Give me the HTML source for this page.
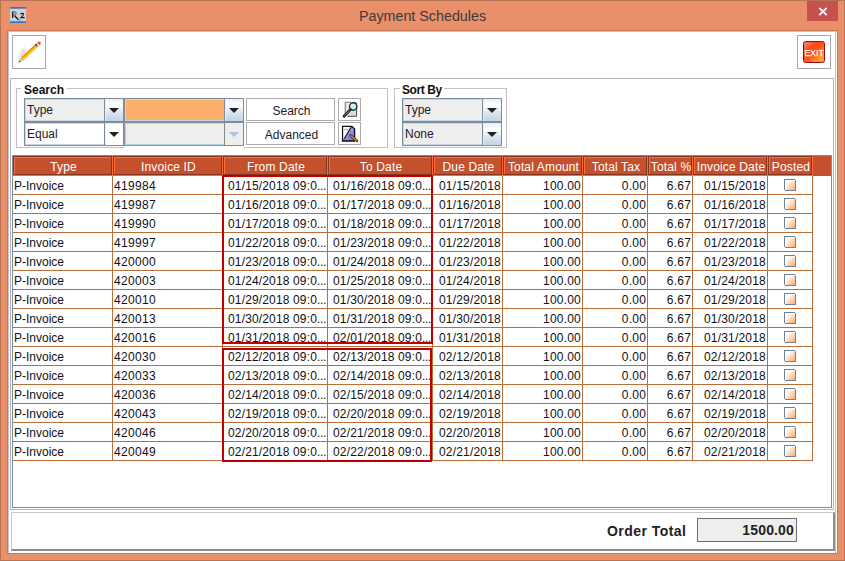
<!DOCTYPE html>
<html><head><meta charset="utf-8">
<style>
*{margin:0;padding:0;box-sizing:border-box}
html,body{width:845px;height:561px;overflow:hidden}
body{position:relative;background:#E9906A;font-family:"Liberation Sans",sans-serif;font-size:12px;color:#111}
.abs{position:absolute}
.t{position:absolute;white-space:nowrap;line-height:14px}
.n{letter-spacing:0.2px}
.id{letter-spacing:0.33px}
.dt{letter-spacing:0.15px}
.el{letter-spacing:-0.33px}
</style></head><body>

<div class="abs" style="left:0;top:0;width:845px;height:1px;background:#B77453"></div>
<div class="abs" style="left:0;top:0;width:1px;height:561px;background:#B77453"></div>
<div class="abs" style="left:844px;top:0;width:1px;height:561px;background:#B77453"></div>
<div class="abs" style="left:0;top:560px;width:845px;height:1px;background:#B77453"></div>
<svg class="abs" style="left:10px;top:7px" width="16" height="16">
 <rect x="0" y="0" width="16" height="16" fill="#CBD1D8"/>
 <rect x="0" y="0" width="16" height="1.7" fill="#3574C4"/>
 <rect x="0" y="14.3" width="16" height="1.7" fill="#3574C4"/>
 <path d="M2.7 5 V11" stroke="#111" stroke-width="1.3"/>
 <path d="M1.8 4.9 H4.5 Q6.6 5 6.2 6.8 Q5.8 8.2 3.6 8.1" stroke="#444" stroke-width="0.9" fill="none"/>
 <path d="M4.6 8.6 L8.4 12.8" stroke="#111" stroke-width="1.3"/>
 <path d="M10.4 7.2 Q11.8 5.8 13.2 6.5 Q14.2 7.6 11 10.6 L14.6 10.6" stroke="#1A1A1A" stroke-width="1.2" fill="none"/>
 <circle cx="10" cy="13.2" r="0.6" fill="#556"/>
</svg>
<div class="t" style="left:0;width:845px;text-align:center;top:7px;font-size:14.3px;line-height:18px;color:#3A3A3A">Payment Schedules</div>
<div class="abs" style="left:807px;top:1px;width:31px;height:20px;background:#C75050"></div>
<svg class="abs" style="left:807px;top:1px" width="31" height="20"><path d="M12.3 6.8 L19.7 14.2 M19.7 6.8 L12.3 14.2" stroke="#fff" stroke-width="1.7"/></svg>
<div class="abs" style="left:7px;top:30px;width:831px;height:524px;border:1px solid #C97A55"></div>
<div class="abs" style="left:8px;top:31px;width:829px;height:522px;background:#fff;border-left:1px solid #BFC8CE;border-top:1px solid #BFC8CE"></div>
<div class="abs" style="left:835px;top:32px;width:1px;height:521px;background:#C4C4C4"></div>
<div class="abs" style="left:12px;top:35px;width:34px;height:34px;border:1px solid #A8A8A8;background:#fff"></div>
<svg class="abs" style="left:12px;top:35px" width="34" height="34">
 <defs><filter id="bl" x="-1" y="-1" width="3" height="3"><feGaussianBlur stdDeviation="1.6"/></filter></defs>
 <path d="M7.5 24.5 L13 14" stroke="#BDBDBD" stroke-width="3" filter="url(#bl)" opacity="0.75"/>
 <g transform="translate(6.3,27.8) rotate(-43.3)">
  <path d="M0 0 L6.5 -1.8 L6.5 1.8 Z" fill="#F0C49C"/>
  <path d="M0 0 L2.6 -0.75 L2.6 0.75 Z" fill="#1E1E1E"/>
  <path d="M3.2 -1.1 L6.5 -0.6 M3.6 1 L6.5 1.3" stroke="#C89070" stroke-width="0.5"/>
  <rect x="6.5" y="-1.8" width="18" height="3.6" fill="#FFB000"/>
  <rect x="6.5" y="-1.8" width="18" height="1.1" fill="#E48800"/>
  <rect x="6.5" y="0.6" width="18" height="1.2" fill="#FFD23C"/>
  <rect x="24.5" y="-1.8" width="1.6" height="2.2" fill="#262626"/>
  <rect x="24.5" y="0.4" width="1.6" height="1.4" fill="#9A9A9A"/>
  <rect x="26.1" y="-1.8" width="1.2" height="3.6" fill="#E8E8E8"/>
  <path d="M27.3 -1.8 H28.6 Q30.3 -1.6 30.3 0 Q30.3 1.6 28.6 1.8 H27.3 Z" fill="#FF5A22"/>
 </g>
</svg>
<div class="abs" style="left:797px;top:35px;width:34px;height:34px;border:1px solid #A8A8A8;background:#fff"></div>
<div class="abs" style="left:803px;top:41px;width:22px;height:22px;border:1px solid #9A0A0A;border-radius:2.5px;background:linear-gradient(135deg,#EE8A7A 0%,#FF4818 32%,#FF5218 52%,#FF9C30 82%,#FFA434 100%)"></div>
<div class="t" style="left:803px;top:46.4px;width:22px;text-align:center;font-size:9.6px;line-height:14px;color:#fff;transform:scaleX(0.92);transform-origin:11.4px 0;-webkit-text-stroke:0.25px #fff">EXIT</div>
<div class="abs" style="left:10px;top:78px;width:824px;height:432px;border:1px solid #B4B4B4"></div>
<div class="abs" style="left:16px;top:88px;width:372px;height:60px;border:1px solid #C0C0C0"></div>
<div class="abs" style="left:394px;top:88px;width:113px;height:60px;border:1px solid #C0C0C0"></div>
<div class="t" style="left:21px;top:83px;padding:0 3px 0 3px;background:#fff;font-weight:bold;font-size:12px">Search</div>
<div class="t" style="left:400px;top:83px;padding:0 2px;background:#fff;font-weight:bold;font-size:12px;letter-spacing:-0.4px">Sort By</div>
<div class="abs" style="left:24px;top:98px;width:100px;height:24px;background:#EEEEEE;border:1px solid #7D8D9C;box-shadow:inset 1px 1px 0 #C8D6E4,inset -1px -1px 0 #C8D6E4"></div>
<div class="abs" style="left:104px;top:98px;width:20px;height:24px;background:linear-gradient(#EAF0F6 0%,#FFFFFF 30%,#DCE6F0 60%,#C2D4E6 100%);border:1px solid #7D8D9C;box-shadow:inset 1px 1px 0 #E6EEF6"></div>
<svg class="abs" style="left:104px;top:98px" width="20" height="24"><path d="M5 10 L15 10 L10 15 Z" fill="#222"/></svg>
<div class="t" style="left:27px;top:103px;font-size:12px;color:#1A1A2A">Type</div>
<div class="abs" style="left:24px;top:122px;width:100px;height:24px;background:#FFFFFF;border:1px solid #7D8D9C;box-shadow:inset 1px 1px 0 #C8D6E4,inset -1px -1px 0 #C8D6E4"></div>
<div class="abs" style="left:104px;top:122px;width:20px;height:24px;background:#FFFFFF;border:1px solid #7D8D9C;box-shadow:inset 1px 1px 0 #E6EEF6"></div>
<svg class="abs" style="left:104px;top:122px" width="20" height="24"><path d="M5 10 L15 10 L10 15 Z" fill="#222"/></svg>
<div class="t" style="left:27px;top:127px;font-size:12px;color:#1A1A2A">Equal</div>
<div class="abs" style="left:124px;top:98px;width:120px;height:24px;background:#FBAF6B;border:1px solid #7D8D9C;box-shadow:inset 1px 1px 0 #C8D6E4,inset -1px -1px 0 #C8D6E4"></div>
<div class="abs" style="left:224px;top:98px;width:20px;height:24px;background:linear-gradient(#EAF0F6 0%,#FFFFFF 30%,#DCE6F0 60%,#C2D4E6 100%);border:1px solid #7D8D9C;box-shadow:inset 1px 1px 0 #E6EEF6"></div>
<svg class="abs" style="left:224px;top:98px" width="20" height="24"><path d="M5 10 L15 10 L10 15 Z" fill="#222"/></svg>
<div class="abs" style="left:124px;top:122px;width:120px;height:24px;background:#EEEEEE;border:1px solid #8A96A2;box-shadow:inset 1px 1px 0 #B8CEE4,inset -2px -1px 0 #B8CEE4"></div>
<div class="abs" style="left:224px;top:122px;width:20px;height:24px;background:#EEEEEE;border:1px solid #8A8A8A;border-top-color:#7D8D9C"></div>
<svg class="abs" style="left:224px;top:122px" width="20" height="24"><path d="M5 10 L15 10 L10 15 Z" fill="#A8C4E0"/></svg>
<div class="abs" style="left:124px;top:146px;width:120px;height:2px;background:#fff"></div>
<div class="abs" style="left:402px;top:98px;width:100px;height:24px;background:#EEEEEE;border:1px solid #7D8D9C;box-shadow:inset 1px 1px 0 #C8D6E4,inset -1px -1px 0 #C8D6E4"></div>
<div class="abs" style="left:482px;top:98px;width:20px;height:24px;background:linear-gradient(#EAF0F6 0%,#FFFFFF 30%,#DCE6F0 60%,#C2D4E6 100%);border:1px solid #7D8D9C;box-shadow:inset 1px 1px 0 #E6EEF6"></div>
<svg class="abs" style="left:482px;top:98px" width="20" height="24"><path d="M5 10 L15 10 L10 15 Z" fill="#222"/></svg>
<div class="t" style="left:405px;top:103px;font-size:12px;color:#1A1A2A">Type</div>
<div class="abs" style="left:402px;top:122px;width:100px;height:24px;background:#EEEEEE;border:1px solid #7D8D9C;box-shadow:inset 1px 1px 0 #C8D6E4,inset -1px -1px 0 #C8D6E4"></div>
<div class="abs" style="left:482px;top:122px;width:20px;height:24px;background:linear-gradient(#EAF0F6 0%,#FFFFFF 30%,#DCE6F0 60%,#C2D4E6 100%);border:1px solid #7D8D9C;box-shadow:inset 1px 1px 0 #E6EEF6"></div>
<svg class="abs" style="left:482px;top:122px" width="20" height="24"><path d="M5 10 L15 10 L10 15 Z" fill="#222"/></svg>
<div class="t" style="left:405px;top:127px;font-size:12px;color:#1A1A2A">None</div>
<div class="abs" style="left:246px;top:98px;width:89px;height:23px;border:1px solid #ABABAB;background:#fff"></div>
<div class="t" style="left:247px;top:104px;width:89px;text-align:center;color:#1A1A2A">Search</div>
<div class="abs" style="left:246px;top:122px;width:89px;height:23px;border:1px solid #ABABAB;background:#fff"></div>
<div class="t" style="left:247px;top:128px;width:89px;text-align:center;color:#1A1A2A">Advanced</div>
<div class="abs" style="left:338px;top:98px;width:23px;height:23px;border:1px solid #ABABAB;background:#fff"></div>
<div class="abs" style="left:338px;top:122px;width:23px;height:23px;border:1px solid #ABABAB;background:#fff"></div>
<svg class="abs" style="left:338px;top:98px" width="23" height="23">
 <defs><linearGradient id="mg" x1="0" y1="0" x2="1" y2="1"><stop offset="0" stop-color="#FFFFFF"/><stop offset="0.5" stop-color="#B4F6F6"/><stop offset="1" stop-color="#A0ECF0"/></linearGradient>
 <linearGradient id="ag" x1="0" y1="0" x2="1" y2="1"><stop offset="0" stop-color="#C8C8FF"/><stop offset="1" stop-color="#6060F0"/></linearGradient></defs>
 <path d="M7.2 4.2 H17.5 L18.6 5.3 V18.3 H7.2 Z" fill="#DCDCDC"/>
 <path d="M7.2 18.3 V4.2 H13" stroke="#777" stroke-width="1" fill="none"/>
 <path d="M17 4.2 L18.6 5.3 V18.3 H9.5" stroke="#4A4A4A" stroke-width="1" fill="none"/>
 <path d="M8.5 6 H12 M8.5 8 H11 M8.5 10 H10.5" stroke="#FFFFFF" stroke-width="1"/>
 <circle cx="15.2" cy="8.5" r="3.7" fill="url(#mg)" stroke="#2A2A2A" stroke-width="1.4"/>
 <path d="M12.4 11.6 L6 18.2" stroke="#262626" stroke-width="2.8" stroke-linecap="round"/>
 <path d="M11.6 12.6 L6.6 17.6" stroke="#9A9A9A" stroke-width="0.8"/>
</svg>
<svg class="abs" style="left:338px;top:122px" width="23" height="23">
 <path d="M4.6 4.4 H14 L16.6 7 V19 H4.6 Z" fill="url(#ag)" stroke="#111" stroke-width="1.3"/>
 <path d="M5.3 5.1 H13.4 L6.6 16.6 L5.3 17 Z" fill="#FFFFFF"/>
 <path d="M5.5 7.4 Q8 6.8 10 8.4" stroke="#9090F0" stroke-width="1.2" fill="none" opacity="0.8"/>
 <path d="M6.2 16.8 L13.2 5" stroke="#111" stroke-width="1.2"/>
 <path d="M12.6 13.6 L18.8 18.8" stroke="#3A2A20" stroke-width="2.8" stroke-linecap="round"/>
 <path d="M12.8 13.8 L18.6 18.6" stroke="#E07038" stroke-width="1.6" stroke-linecap="round"/>
</svg>
<div class="abs" style="left:12px;top:155px;width:820px;height:353px;border:1px solid #7B8EA2;background:#fff"></div>
<div class="abs" style="left:13px;top:156px;width:818px;height:20px;background:#C4502E"></div>
<div class="abs" style="left:13px;top:175px;width:800px;height:1px;background:#FF6A3A"></div>
<div class="abs" style="left:13px;top:156px;width:99px;height:19px;border:1px solid #86351C;box-shadow:inset 1px 1px 0 #FF6E3C"></div>
<div class="abs" style="left:112px;top:156px;width:1px;height:20px;background:#FF6A3A"></div>
<div class="t" style="left:14px;top:160px;width:99px;text-align:center;color:#fff;letter-spacing:0.15px">Type</div>
<div class="abs" style="left:113px;top:156px;width:109px;height:19px;border:1px solid #86351C;box-shadow:inset 1px 1px 0 #FF6E3C"></div>
<div class="abs" style="left:222px;top:156px;width:1px;height:20px;background:#FF6A3A"></div>
<div class="t" style="left:114px;top:160px;width:109px;text-align:center;color:#fff;letter-spacing:0.15px">Invoice ID</div>
<div class="abs" style="left:223px;top:156px;width:104px;height:19px;border:1px solid #86351C;box-shadow:inset 1px 1px 0 #FF6E3C"></div>
<div class="abs" style="left:327px;top:156px;width:1px;height:20px;background:#FF6A3A"></div>
<div class="t" style="left:224px;top:160px;width:104px;text-align:center;color:#fff;letter-spacing:0.15px">From Date</div>
<div class="abs" style="left:328px;top:156px;width:104px;height:19px;border:1px solid #86351C;box-shadow:inset 1px 1px 0 #FF6E3C"></div>
<div class="abs" style="left:432px;top:156px;width:1px;height:20px;background:#FF6A3A"></div>
<div class="t" style="left:329px;top:160px;width:104px;text-align:center;color:#fff;letter-spacing:0.15px">To Date</div>
<div class="abs" style="left:433px;top:156px;width:69px;height:19px;border:1px solid #86351C;box-shadow:inset 1px 1px 0 #FF6E3C"></div>
<div class="abs" style="left:502px;top:156px;width:1px;height:20px;background:#FF6A3A"></div>
<div class="t" style="left:434px;top:160px;width:69px;text-align:center;color:#fff;letter-spacing:0.15px">Due Date</div>
<div class="abs" style="left:503px;top:156px;width:79px;height:19px;border:1px solid #86351C;box-shadow:inset 1px 1px 0 #FF6E3C"></div>
<div class="abs" style="left:582px;top:156px;width:1px;height:20px;background:#FF6A3A"></div>
<div class="t" style="left:504px;top:160px;width:79px;text-align:center;color:#fff;letter-spacing:0.15px">Total Amount</div>
<div class="abs" style="left:583px;top:156px;width:64px;height:19px;border:1px solid #86351C;box-shadow:inset 1px 1px 0 #FF6E3C"></div>
<div class="abs" style="left:647px;top:156px;width:1px;height:20px;background:#FF6A3A"></div>
<div class="t" style="left:584px;top:160px;width:64px;text-align:center;color:#fff;letter-spacing:0.15px">Total Tax</div>
<div class="abs" style="left:648px;top:156px;width:44px;height:19px;border:1px solid #86351C;box-shadow:inset 1px 1px 0 #FF6E3C"></div>
<div class="abs" style="left:692px;top:156px;width:1px;height:20px;background:#FF6A3A"></div>
<div class="t" style="left:649px;top:160px;width:44px;text-align:center;color:#fff;letter-spacing:0.15px">Total %</div>
<div class="abs" style="left:693px;top:156px;width:74px;height:19px;border:1px solid #86351C;box-shadow:inset 1px 1px 0 #FF6E3C"></div>
<div class="abs" style="left:767px;top:156px;width:1px;height:20px;background:#FF6A3A"></div>
<div class="t" style="left:694px;top:160px;width:74px;text-align:center;color:#fff;letter-spacing:0.15px">Invoice Date</div>
<div class="abs" style="left:768px;top:156px;width:44px;height:19px;border:1px solid #86351C;box-shadow:inset 1px 1px 0 #FF6E3C"></div>
<div class="abs" style="left:812px;top:156px;width:1px;height:20px;background:#FF6A3A"></div>
<div class="t" style="left:769px;top:160px;width:44px;text-align:center;color:#fff;letter-spacing:0.15px">Posted</div>
<div class="abs" style="left:13px;top:194px;width:800px;height:1px;background:#B96F3A"></div>
<div class="abs" style="left:13px;top:213px;width:800px;height:1px;background:#B96F3A"></div>
<div class="abs" style="left:13px;top:232px;width:800px;height:1px;background:#B96F3A"></div>
<div class="abs" style="left:13px;top:251px;width:800px;height:1px;background:#B96F3A"></div>
<div class="abs" style="left:13px;top:270px;width:800px;height:1px;background:#B96F3A"></div>
<div class="abs" style="left:13px;top:289px;width:800px;height:1px;background:#B96F3A"></div>
<div class="abs" style="left:13px;top:308px;width:800px;height:1px;background:#B96F3A"></div>
<div class="abs" style="left:13px;top:327px;width:800px;height:1px;background:#B96F3A"></div>
<div class="abs" style="left:13px;top:346px;width:800px;height:1px;background:#B96F3A"></div>
<div class="abs" style="left:13px;top:365px;width:800px;height:1px;background:#B96F3A"></div>
<div class="abs" style="left:13px;top:384px;width:800px;height:1px;background:#B96F3A"></div>
<div class="abs" style="left:13px;top:403px;width:800px;height:1px;background:#B96F3A"></div>
<div class="abs" style="left:13px;top:422px;width:800px;height:1px;background:#B96F3A"></div>
<div class="abs" style="left:13px;top:441px;width:800px;height:1px;background:#B96F3A"></div>
<div class="abs" style="left:13px;top:460px;width:800px;height:1px;background:#B96F3A"></div>
<div class="abs" style="left:112px;top:176px;width:1px;height:285px;background:#B96F3A"></div>
<div class="abs" style="left:222px;top:176px;width:1px;height:285px;background:#B96F3A"></div>
<div class="abs" style="left:327px;top:176px;width:1px;height:285px;background:#B96F3A"></div>
<div class="abs" style="left:432px;top:176px;width:1px;height:285px;background:#B96F3A"></div>
<div class="abs" style="left:502px;top:176px;width:1px;height:285px;background:#B96F3A"></div>
<div class="abs" style="left:582px;top:176px;width:1px;height:285px;background:#B96F3A"></div>
<div class="abs" style="left:647px;top:176px;width:1px;height:285px;background:#B96F3A"></div>
<div class="abs" style="left:692px;top:176px;width:1px;height:285px;background:#B96F3A"></div>
<div class="abs" style="left:767px;top:176px;width:1px;height:285px;background:#B96F3A"></div>
<div class="abs" style="left:812px;top:176px;width:1px;height:285px;background:#B96F3A"></div>
<div class="t" style="left:14px;top:179px">P-Invoice</div>
<div class="t id" style="left:114px;top:179px">419984</div>
<div class="t dt" style="left:228px;top:179px">01/15/2018 09:0<span class="el">...</span></div>
<div class="t dt" style="left:333px;top:179px">01/16/2018 09:0<span class="el">...</span></div>
<div class="t n" style="right:344px;top:179px">01/15/2018</div>
<div class="t n" style="right:264px;top:179px">100.00</div>
<div class="t n" style="right:199px;top:179px">0.00</div>
<div class="t n" style="right:154px;top:179px">6.67</div>
<div class="t n" style="right:79px;top:179px">01/15/2018</div>
<svg class="abs" style="left:784px;top:179px" width="13" height="13">
<rect x="2" y="2" width="9" height="9" fill="url(#cg)"/>
<path d="M0 0H11V1H1V11H0Z M12 1V12H1V11H11V1Z" fill="#6E8196"/></svg>
<div class="t" style="left:14px;top:198px">P-Invoice</div>
<div class="t id" style="left:114px;top:198px">419987</div>
<div class="t dt" style="left:228px;top:198px">01/16/2018 09:0<span class="el">...</span></div>
<div class="t dt" style="left:333px;top:198px">01/17/2018 09:0<span class="el">...</span></div>
<div class="t n" style="right:344px;top:198px">01/16/2018</div>
<div class="t n" style="right:264px;top:198px">100.00</div>
<div class="t n" style="right:199px;top:198px">0.00</div>
<div class="t n" style="right:154px;top:198px">6.67</div>
<div class="t n" style="right:79px;top:198px">01/16/2018</div>
<svg class="abs" style="left:784px;top:198px" width="13" height="13">
<rect x="2" y="2" width="9" height="9" fill="url(#cg)"/>
<path d="M0 0H11V1H1V11H0Z M12 1V12H1V11H11V1Z" fill="#6E8196"/></svg>
<div class="t" style="left:14px;top:217px">P-Invoice</div>
<div class="t id" style="left:114px;top:217px">419990</div>
<div class="t dt" style="left:228px;top:217px">01/17/2018 09:0<span class="el">...</span></div>
<div class="t dt" style="left:333px;top:217px">01/18/2018 09:0<span class="el">...</span></div>
<div class="t n" style="right:344px;top:217px">01/17/2018</div>
<div class="t n" style="right:264px;top:217px">100.00</div>
<div class="t n" style="right:199px;top:217px">0.00</div>
<div class="t n" style="right:154px;top:217px">6.67</div>
<div class="t n" style="right:79px;top:217px">01/17/2018</div>
<svg class="abs" style="left:784px;top:217px" width="13" height="13">
<rect x="2" y="2" width="9" height="9" fill="url(#cg)"/>
<path d="M0 0H11V1H1V11H0Z M12 1V12H1V11H11V1Z" fill="#6E8196"/></svg>
<div class="t" style="left:14px;top:236px">P-Invoice</div>
<div class="t id" style="left:114px;top:236px">419997</div>
<div class="t dt" style="left:228px;top:236px">01/22/2018 09:0<span class="el">...</span></div>
<div class="t dt" style="left:333px;top:236px">01/23/2018 09:0<span class="el">...</span></div>
<div class="t n" style="right:344px;top:236px">01/22/2018</div>
<div class="t n" style="right:264px;top:236px">100.00</div>
<div class="t n" style="right:199px;top:236px">0.00</div>
<div class="t n" style="right:154px;top:236px">6.67</div>
<div class="t n" style="right:79px;top:236px">01/22/2018</div>
<svg class="abs" style="left:784px;top:236px" width="13" height="13">
<rect x="2" y="2" width="9" height="9" fill="url(#cg)"/>
<path d="M0 0H11V1H1V11H0Z M12 1V12H1V11H11V1Z" fill="#6E8196"/></svg>
<div class="t" style="left:14px;top:255px">P-Invoice</div>
<div class="t id" style="left:114px;top:255px">420000</div>
<div class="t dt" style="left:228px;top:255px">01/23/2018 09:0<span class="el">...</span></div>
<div class="t dt" style="left:333px;top:255px">01/24/2018 09:0<span class="el">...</span></div>
<div class="t n" style="right:344px;top:255px">01/23/2018</div>
<div class="t n" style="right:264px;top:255px">100.00</div>
<div class="t n" style="right:199px;top:255px">0.00</div>
<div class="t n" style="right:154px;top:255px">6.67</div>
<div class="t n" style="right:79px;top:255px">01/23/2018</div>
<svg class="abs" style="left:784px;top:255px" width="13" height="13">
<rect x="2" y="2" width="9" height="9" fill="url(#cg)"/>
<path d="M0 0H11V1H1V11H0Z M12 1V12H1V11H11V1Z" fill="#6E8196"/></svg>
<div class="t" style="left:14px;top:274px">P-Invoice</div>
<div class="t id" style="left:114px;top:274px">420003</div>
<div class="t dt" style="left:228px;top:274px">01/24/2018 09:0<span class="el">...</span></div>
<div class="t dt" style="left:333px;top:274px">01/25/2018 09:0<span class="el">...</span></div>
<div class="t n" style="right:344px;top:274px">01/24/2018</div>
<div class="t n" style="right:264px;top:274px">100.00</div>
<div class="t n" style="right:199px;top:274px">0.00</div>
<div class="t n" style="right:154px;top:274px">6.67</div>
<div class="t n" style="right:79px;top:274px">01/24/2018</div>
<svg class="abs" style="left:784px;top:274px" width="13" height="13">
<rect x="2" y="2" width="9" height="9" fill="url(#cg)"/>
<path d="M0 0H11V1H1V11H0Z M12 1V12H1V11H11V1Z" fill="#6E8196"/></svg>
<div class="t" style="left:14px;top:293px">P-Invoice</div>
<div class="t id" style="left:114px;top:293px">420010</div>
<div class="t dt" style="left:228px;top:293px">01/29/2018 09:0<span class="el">...</span></div>
<div class="t dt" style="left:333px;top:293px">01/30/2018 09:0<span class="el">...</span></div>
<div class="t n" style="right:344px;top:293px">01/29/2018</div>
<div class="t n" style="right:264px;top:293px">100.00</div>
<div class="t n" style="right:199px;top:293px">0.00</div>
<div class="t n" style="right:154px;top:293px">6.67</div>
<div class="t n" style="right:79px;top:293px">01/29/2018</div>
<svg class="abs" style="left:784px;top:293px" width="13" height="13">
<rect x="2" y="2" width="9" height="9" fill="url(#cg)"/>
<path d="M0 0H11V1H1V11H0Z M12 1V12H1V11H11V1Z" fill="#6E8196"/></svg>
<div class="t" style="left:14px;top:312px">P-Invoice</div>
<div class="t id" style="left:114px;top:312px">420013</div>
<div class="t dt" style="left:228px;top:312px">01/30/2018 09:0<span class="el">...</span></div>
<div class="t dt" style="left:333px;top:312px">01/31/2018 09:0<span class="el">...</span></div>
<div class="t n" style="right:344px;top:312px">01/30/2018</div>
<div class="t n" style="right:264px;top:312px">100.00</div>
<div class="t n" style="right:199px;top:312px">0.00</div>
<div class="t n" style="right:154px;top:312px">6.67</div>
<div class="t n" style="right:79px;top:312px">01/30/2018</div>
<svg class="abs" style="left:784px;top:312px" width="13" height="13">
<rect x="2" y="2" width="9" height="9" fill="url(#cg)"/>
<path d="M0 0H11V1H1V11H0Z M12 1V12H1V11H11V1Z" fill="#6E8196"/></svg>
<div class="t" style="left:14px;top:331px">P-Invoice</div>
<div class="t id" style="left:114px;top:331px">420016</div>
<div class="t dt" style="left:228px;top:331px">01/31/2018 09:0<span class="el">...</span></div>
<div class="t dt" style="left:333px;top:331px">02/01/2018 09:0<span class="el">...</span></div>
<div class="t n" style="right:344px;top:331px">01/31/2018</div>
<div class="t n" style="right:264px;top:331px">100.00</div>
<div class="t n" style="right:199px;top:331px">0.00</div>
<div class="t n" style="right:154px;top:331px">6.67</div>
<div class="t n" style="right:79px;top:331px">01/31/2018</div>
<svg class="abs" style="left:784px;top:331px" width="13" height="13">
<rect x="2" y="2" width="9" height="9" fill="url(#cg)"/>
<path d="M0 0H11V1H1V11H0Z M12 1V12H1V11H11V1Z" fill="#6E8196"/></svg>
<div class="t" style="left:14px;top:350px">P-Invoice</div>
<div class="t id" style="left:114px;top:350px">420030</div>
<div class="t dt" style="left:228px;top:350px">02/12/2018 09:0<span class="el">...</span></div>
<div class="t dt" style="left:333px;top:350px">02/13/2018 09:0<span class="el">...</span></div>
<div class="t n" style="right:344px;top:350px">02/12/2018</div>
<div class="t n" style="right:264px;top:350px">100.00</div>
<div class="t n" style="right:199px;top:350px">0.00</div>
<div class="t n" style="right:154px;top:350px">6.67</div>
<div class="t n" style="right:79px;top:350px">02/12/2018</div>
<svg class="abs" style="left:784px;top:350px" width="13" height="13">
<rect x="2" y="2" width="9" height="9" fill="url(#cg)"/>
<path d="M0 0H11V1H1V11H0Z M12 1V12H1V11H11V1Z" fill="#6E8196"/></svg>
<div class="t" style="left:14px;top:369px">P-Invoice</div>
<div class="t id" style="left:114px;top:369px">420033</div>
<div class="t dt" style="left:228px;top:369px">02/13/2018 09:0<span class="el">...</span></div>
<div class="t dt" style="left:333px;top:369px">02/14/2018 09:0<span class="el">...</span></div>
<div class="t n" style="right:344px;top:369px">02/13/2018</div>
<div class="t n" style="right:264px;top:369px">100.00</div>
<div class="t n" style="right:199px;top:369px">0.00</div>
<div class="t n" style="right:154px;top:369px">6.67</div>
<div class="t n" style="right:79px;top:369px">02/13/2018</div>
<svg class="abs" style="left:784px;top:369px" width="13" height="13">
<rect x="2" y="2" width="9" height="9" fill="url(#cg)"/>
<path d="M0 0H11V1H1V11H0Z M12 1V12H1V11H11V1Z" fill="#6E8196"/></svg>
<div class="t" style="left:14px;top:388px">P-Invoice</div>
<div class="t id" style="left:114px;top:388px">420036</div>
<div class="t dt" style="left:228px;top:388px">02/14/2018 09:0<span class="el">...</span></div>
<div class="t dt" style="left:333px;top:388px">02/15/2018 09:0<span class="el">...</span></div>
<div class="t n" style="right:344px;top:388px">02/14/2018</div>
<div class="t n" style="right:264px;top:388px">100.00</div>
<div class="t n" style="right:199px;top:388px">0.00</div>
<div class="t n" style="right:154px;top:388px">6.67</div>
<div class="t n" style="right:79px;top:388px">02/14/2018</div>
<svg class="abs" style="left:784px;top:388px" width="13" height="13">
<rect x="2" y="2" width="9" height="9" fill="url(#cg)"/>
<path d="M0 0H11V1H1V11H0Z M12 1V12H1V11H11V1Z" fill="#6E8196"/></svg>
<div class="t" style="left:14px;top:407px">P-Invoice</div>
<div class="t id" style="left:114px;top:407px">420043</div>
<div class="t dt" style="left:228px;top:407px">02/19/2018 09:0<span class="el">...</span></div>
<div class="t dt" style="left:333px;top:407px">02/20/2018 09:0<span class="el">...</span></div>
<div class="t n" style="right:344px;top:407px">02/19/2018</div>
<div class="t n" style="right:264px;top:407px">100.00</div>
<div class="t n" style="right:199px;top:407px">0.00</div>
<div class="t n" style="right:154px;top:407px">6.67</div>
<div class="t n" style="right:79px;top:407px">02/19/2018</div>
<svg class="abs" style="left:784px;top:407px" width="13" height="13">
<rect x="2" y="2" width="9" height="9" fill="url(#cg)"/>
<path d="M0 0H11V1H1V11H0Z M12 1V12H1V11H11V1Z" fill="#6E8196"/></svg>
<div class="t" style="left:14px;top:426px">P-Invoice</div>
<div class="t id" style="left:114px;top:426px">420046</div>
<div class="t dt" style="left:228px;top:426px">02/20/2018 09:0<span class="el">...</span></div>
<div class="t dt" style="left:333px;top:426px">02/21/2018 09:0<span class="el">...</span></div>
<div class="t n" style="right:344px;top:426px">02/20/2018</div>
<div class="t n" style="right:264px;top:426px">100.00</div>
<div class="t n" style="right:199px;top:426px">0.00</div>
<div class="t n" style="right:154px;top:426px">6.67</div>
<div class="t n" style="right:79px;top:426px">02/20/2018</div>
<svg class="abs" style="left:784px;top:426px" width="13" height="13">
<rect x="2" y="2" width="9" height="9" fill="url(#cg)"/>
<path d="M0 0H11V1H1V11H0Z M12 1V12H1V11H11V1Z" fill="#6E8196"/></svg>
<div class="t" style="left:14px;top:445px">P-Invoice</div>
<div class="t id" style="left:114px;top:445px">420049</div>
<div class="t dt" style="left:228px;top:445px">02/21/2018 09:0<span class="el">...</span></div>
<div class="t dt" style="left:333px;top:445px">02/22/2018 09:0<span class="el">...</span></div>
<div class="t n" style="right:344px;top:445px">02/21/2018</div>
<div class="t n" style="right:264px;top:445px">100.00</div>
<div class="t n" style="right:199px;top:445px">0.00</div>
<div class="t n" style="right:154px;top:445px">6.67</div>
<div class="t n" style="right:79px;top:445px">02/21/2018</div>
<svg class="abs" style="left:784px;top:445px" width="13" height="13">
<rect x="2" y="2" width="9" height="9" fill="url(#cg)"/>
<path d="M0 0H11V1H1V11H0Z M12 1V12H1V11H11V1Z" fill="#6E8196"/></svg>
<div class="abs" style="left:222px;top:175px;width:211px;height:169px;border:2px solid #C00000"></div>
<div class="abs" style="left:222px;top:348px;width:210px;height:114px;border:2px solid #C00000"></div>
<div class="abs" style="left:11px;top:512px;width:824px;height:39px;border-top:1px solid #C8C8C8;border-left:1px solid #C8C8C8;border-right:2px solid #8C8C8C;border-bottom:2px solid #8C8C8C"></div>
<div class="t" style="left:607px;top:522px;font-weight:bold;font-size:14px;line-height:18px;color:#222;letter-spacing:0.45px">Order Total</div>
<div class="abs" style="left:697px;top:518px;width:100px;height:24px;border:1px solid #6E6E6E;background:#EEEEEE"></div>
<div class="t" style="right:51px;top:521px;font-weight:bold;font-size:14px;line-height:18px;color:#222;letter-spacing:0.15px">1500.00</div>
<svg width="0" height="0" style="position:absolute"><defs><linearGradient id="cg" x1="0" y1="0" x2="1" y2="1"><stop offset="0.15" stop-color="#FFFFFF"/><stop offset="1" stop-color="#FFAA68"/></linearGradient></defs></svg>
</body></html>
